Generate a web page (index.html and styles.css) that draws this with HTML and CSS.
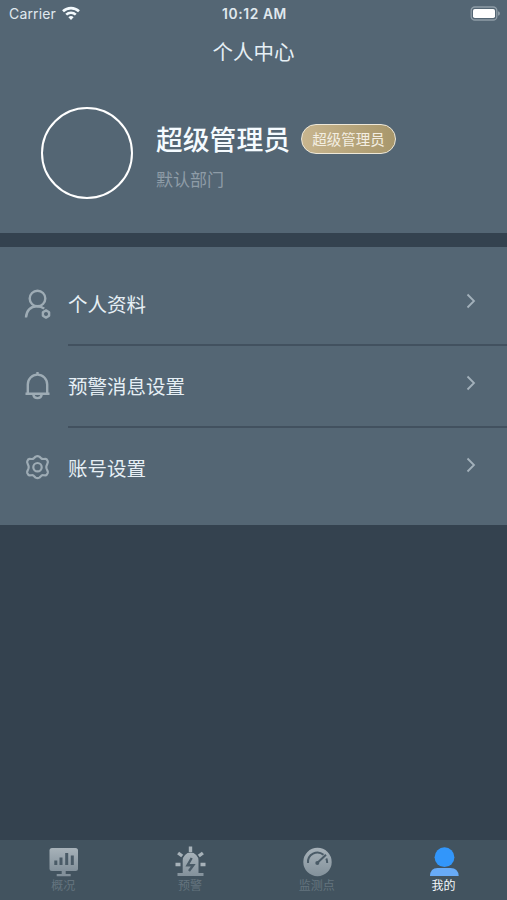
FILE: index.html
```html
<!DOCTYPE html>
<html lang="zh-CN">
<head>
    <meta charset="UTF-8">
    <title>个人中心</title>
    <link rel="stylesheet" href="styles.css">
</head>
<body>
    <div id="page">
        <div id="header">
            <div class="status-bar">
                <div class="carrier">
                    <span>Carrier</span>
                    <svg width="18" height="14" viewBox="0 0 18 14" fill="none" stroke="#f4fafd" stroke-width="2.6">
                        <path d="M1 5.3a11.6 11.6 0 0 1 16 0"/>
                        <path d="M4.2 8.6a7 7 0 0 1 9.6 0"/>
                        <path d="M9 14l-2.6-2.8a3.7 3.7 0 0 1 5.2 0z" fill="#f4fafd" stroke="none"/>
                    </svg>
                </div>
                <div class="time">10:12 AM</div>
                <div class="battery">
                    <svg width="30" height="15" viewBox="0 0 30 15">
                        <rect x="1.2" y="1" width="25.6" height="13" rx="3.6" fill="none" stroke="#8f9da7" stroke-width="1.3"/>
                        <rect x="3" y="3" width="22" height="9" rx="1.8" fill="#fff"/>
                        <path d="M28 5.2q2 .6 2 2.3t-2 2.3z" fill="#8f9da7"/>
                    </svg>
                </div>
            </div>
            <div class="title">个人中心</div>
            <div class="user">
                <div class="avatar"></div>
                <div class="info">
                    <div class="name-row">
                        <span class="name">超级管理员</span>
                        <span class="role">超级管理员</span>
                    </div>
                    <div class="dept">默认部门</div>
                </div>
            </div>
        </div>

        <div id="menu">
            <div class="item">
                <svg class="icon" width="30" height="32" viewBox="0 0 30 32" fill="none" stroke="#9eacb5" stroke-width="2.4">
                    <circle cx="15.5" cy="10.5" r="7.8"/>
                    <path d="M4 29.5c.3-6.800 4.500-11.300 10.800-11.300 3 0 5.500 .8 7.400 2.400"/>
                    <path d="M24 22.400l3.100 1.800v3.600L24 29.600l-3.100-1.800v-3.600z" stroke-linejoin="round"/>
                </svg>
                <div class="cell">
                    <span>个人资料</span>
                    <svg class="arrow" width="10" height="16" viewBox="0 0 10 16"><path d="M1.500 1.500L8 8l-6.500 6.500"/></svg>
                </div>
            </div>
            <div class="item">
                <svg class="icon" width="30" height="32" viewBox="0 0 30 32" fill="none" stroke="#9eacb5" stroke-width="2.4">
                    <path d="M5.800 23.800V14.500a9.700 9.900 0 0 1 19.400 0v9.300"/>
                    <path d="M3.500 23.800h24M15.500 2v3"/>
                    <path d="M11.300 24.600c.4 2.400 2 3.500 4.200 3.500s3.800-1.100 4.200-3.500"/>
                </svg>
                <div class="cell">
                    <span>预警消息设置</span>
                    <svg class="arrow" width="10" height="16" viewBox="0 0 10 16"><path d="M1.500 1.500L8 8l-6.500 6.500"/></svg>
                </div>
            </div>
            <div class="item">
                <svg class="icon" width="30" height="32" viewBox="0 0 30 32" fill="none" stroke="#9eacb5" stroke-width="2.2" stroke-linejoin="round">
                    <path d="M13.600 4.600q1.900-1 3.800 0l2 1.900q.8.600 1.800.5l2.400-.1q1.300.2 2.100 2.200.4 1.100-.2 2.200l-1 2.600q-.4 1.200 0 2.400l1 2.600q.6 1.100.2 2.200-.8 2-2.100 2.200l-2.400-.1q-1-.1-1.800.5l-2 1.900q-1.900 1-3.800 0l-2-1.900q-.8-.6-1.800-.5l-2.400.1q-1.300-.2-2.100-2.200-.4-1.100.2-2.200l1-2.600q.4-1.200 0-2.400l-1-2.600q-.6-1.100-.2-2.200.8-2 2.100-2.200l2.400.1q1 .1 1.800-.5z"/>
                    <circle cx="15.500" cy="15.200" r="4.200"/>
                </svg>
                <div class="cell">
                    <span>账号设置</span>
                    <svg class="arrow" width="10" height="16" viewBox="0 0 10 16"><path d="M1.500 1.500L8 8l-6.500 6.500"/></svg>
                </div>
            </div>
        </div>

        <div id="tabbar">
            <div class="tab">
                <svg width="32" height="32" viewBox="0 0 32 32">
                    <defs>
                        <linearGradient id="gray" x1="0" y1="0" x2="0" y2="1">
                            <stop offset="0" stop-color="#a7b2b9"/>
                            <stop offset="1" stop-color="#83919b"/>
                        </linearGradient>
                    </defs>
                    <rect x="2.500" y="2" width="28.500" height="23" rx="2.500" fill="url(#gray)"/>
                    <path d="M14.700 25h4v3h5v2.200H9.700V28h5z" fill="#83919b"/>
                    <path d="M8.800 19v-4.500M14 19v-7.500M19.700 19V7M25.300 19V9.500" stroke="#4a5b67" stroke-width="3"/>
                </svg>
                <span>概况</span>
            </div>
            <div class="tab">
                <svg width="32" height="32" viewBox="0 0 32 32">
                    <path d="M8.700 27V14.500a7.900 7.900 0 0 1 15.800 0V27h5v3h-26v-3z" fill="url(#gray)"/>
                    <path d="M16.500 .5V6M4.100 7l4.100 3M28.900 7l-4.100 3M1.500 18.500h5M26.500 18.500h5" stroke="#a7b2b9" stroke-width="3.400"/>
                    <path d="M17.700 12l-4.200 7.200h5.800L15 25" fill="none" stroke="#4a5b67" stroke-width="2.400"/>
                </svg>
                <span>预警</span>
            </div>
            <div class="tab">
                <svg width="32" height="32" viewBox="0 0 32 32">
                    <circle cx="16.500" cy="16" r="14.200" fill="url(#gray)"/>
                    <path d="M7 17a9.500 9.500 0 0 1 15.500-8.200M25.300 12.500q.9 2 .9 4.500M16.500 16.800l8.500-8" fill="none" stroke="#4a5b67" stroke-width="2"/>
                    <circle cx="16.300" cy="17" r="2" fill="#4a5b67"/>
                </svg>
                <span>监测点</span>
            </div>
            <div class="tab active">
                <svg width="32" height="32" viewBox="0 0 32 32">
                    <path d="M2 30q.3-8 7.500-8h13q7.700 0 8.200 8z" fill="#68abf7"/>
                    <circle cx="16.500" cy="11.200" r="9.900" fill="#3296fa"/>
                </svg>
                <span>我的</span>
            </div>
        </div>
    </div>
</body>
</html>
```

FILE: styles.css
```css
body {
    margin: 0;
    padding: 0;
    font-family: "Noto Sans CJK SC", sans-serif;
    background-color: #34424f;
}

svg {
    display: block;
}

#page {
    display: flex;
    flex-direction: column;
    height: 900px;
    overflow: hidden;
}

#header {
    height: 233px;
    background-color: #546674;
}

.status-bar {
    display: grid;
    grid-template-columns: 1fr auto 1fr;
    align-items: center;
    height: 27px;
    padding: 0 7px 0 9px;
    font-family: Inter, sans-serif;
    font-size: 14px;
    color: #e0e9ef;
}

.carrier {
    display: flex;
    align-items: center;
    gap: 6px;
    letter-spacing: 0.15px;
}

.carrier svg {
    margin-top: -1px;
}

.time {
    font-size: 13.8px;
    font-weight: 600;
    letter-spacing: 0.6px;
}

.battery {
    justify-self: end;
}

.title {
    height: 50px;
    line-height: 48px;
    text-align: center;
    font-size: 20.5px;
    color: #e6eff5;
}

.user {
    display: flex;
    align-items: center;
    padding: 30px 0 0 41px;
}

.avatar {
    box-sizing: border-box;
    width: 92px;
    height: 92px;
    border: 2.5px solid #fff;
    border-radius: 50%;
}

.info {
    margin-left: 23px;
    padding-top: 7px;
}

.name-row {
    display: flex;
    align-items: center;
    gap: 11px;
    height: 36px;
}

.name {
    font-size: 26.8px;
    font-weight: 500;
    color: #f5fbff;
}

.role {
    box-sizing: border-box;
    width: 95px;
    height: 30px;
    line-height: 27px;
    border: 1.5px solid #eee8d8;
    border-radius: 15px;
    background: linear-gradient(90deg, #c8b58e, #a8976b);
    text-align: center;
    font-size: 14.5px;
    color: #f3eee2;
}

.dept {
    margin-top: 8px;
    line-height: 28px;
    font-size: 17px;
    color: #8e9ca7;
}

#menu {
    margin-top: 14px;
    padding: 17px 0 15px;
    background-color: #546674;
}

.item {
    display: flex;
    height: 82px;
    padding-left: 22px;
}

.icon {
    margin: 24px 16px 0 0;
}

.cell {
    box-sizing: border-box;
    display: flex;
    flex: 1;
    justify-content: space-between;
    align-items: center;
    padding-right: 31px;
    border-bottom: 2px solid #42515f;
    font-size: 19.5px;
    color: #e6eff5;
}

.cell span {
    margin-top: -2px;
}

.item:last-child .cell {
    border-bottom-color: transparent;
}

.arrow {
    margin-top: -7px;
    fill: none;
    stroke: #a3b1bb;
    stroke-width: 1.8;
}

#tabbar {
    display: flex;
    height: 60px;
    margin-top: auto;
    background-color: #42535f;
}

.tab {
    display: flex;
    flex: 1;
    flex-direction: column;
    align-items: center;
    padding-top: 6px;
    font-size: 12px;
    line-height: 14px;
    color: #64737e;
}

.tab.active {
    color: #f2f8fc;
}
```
